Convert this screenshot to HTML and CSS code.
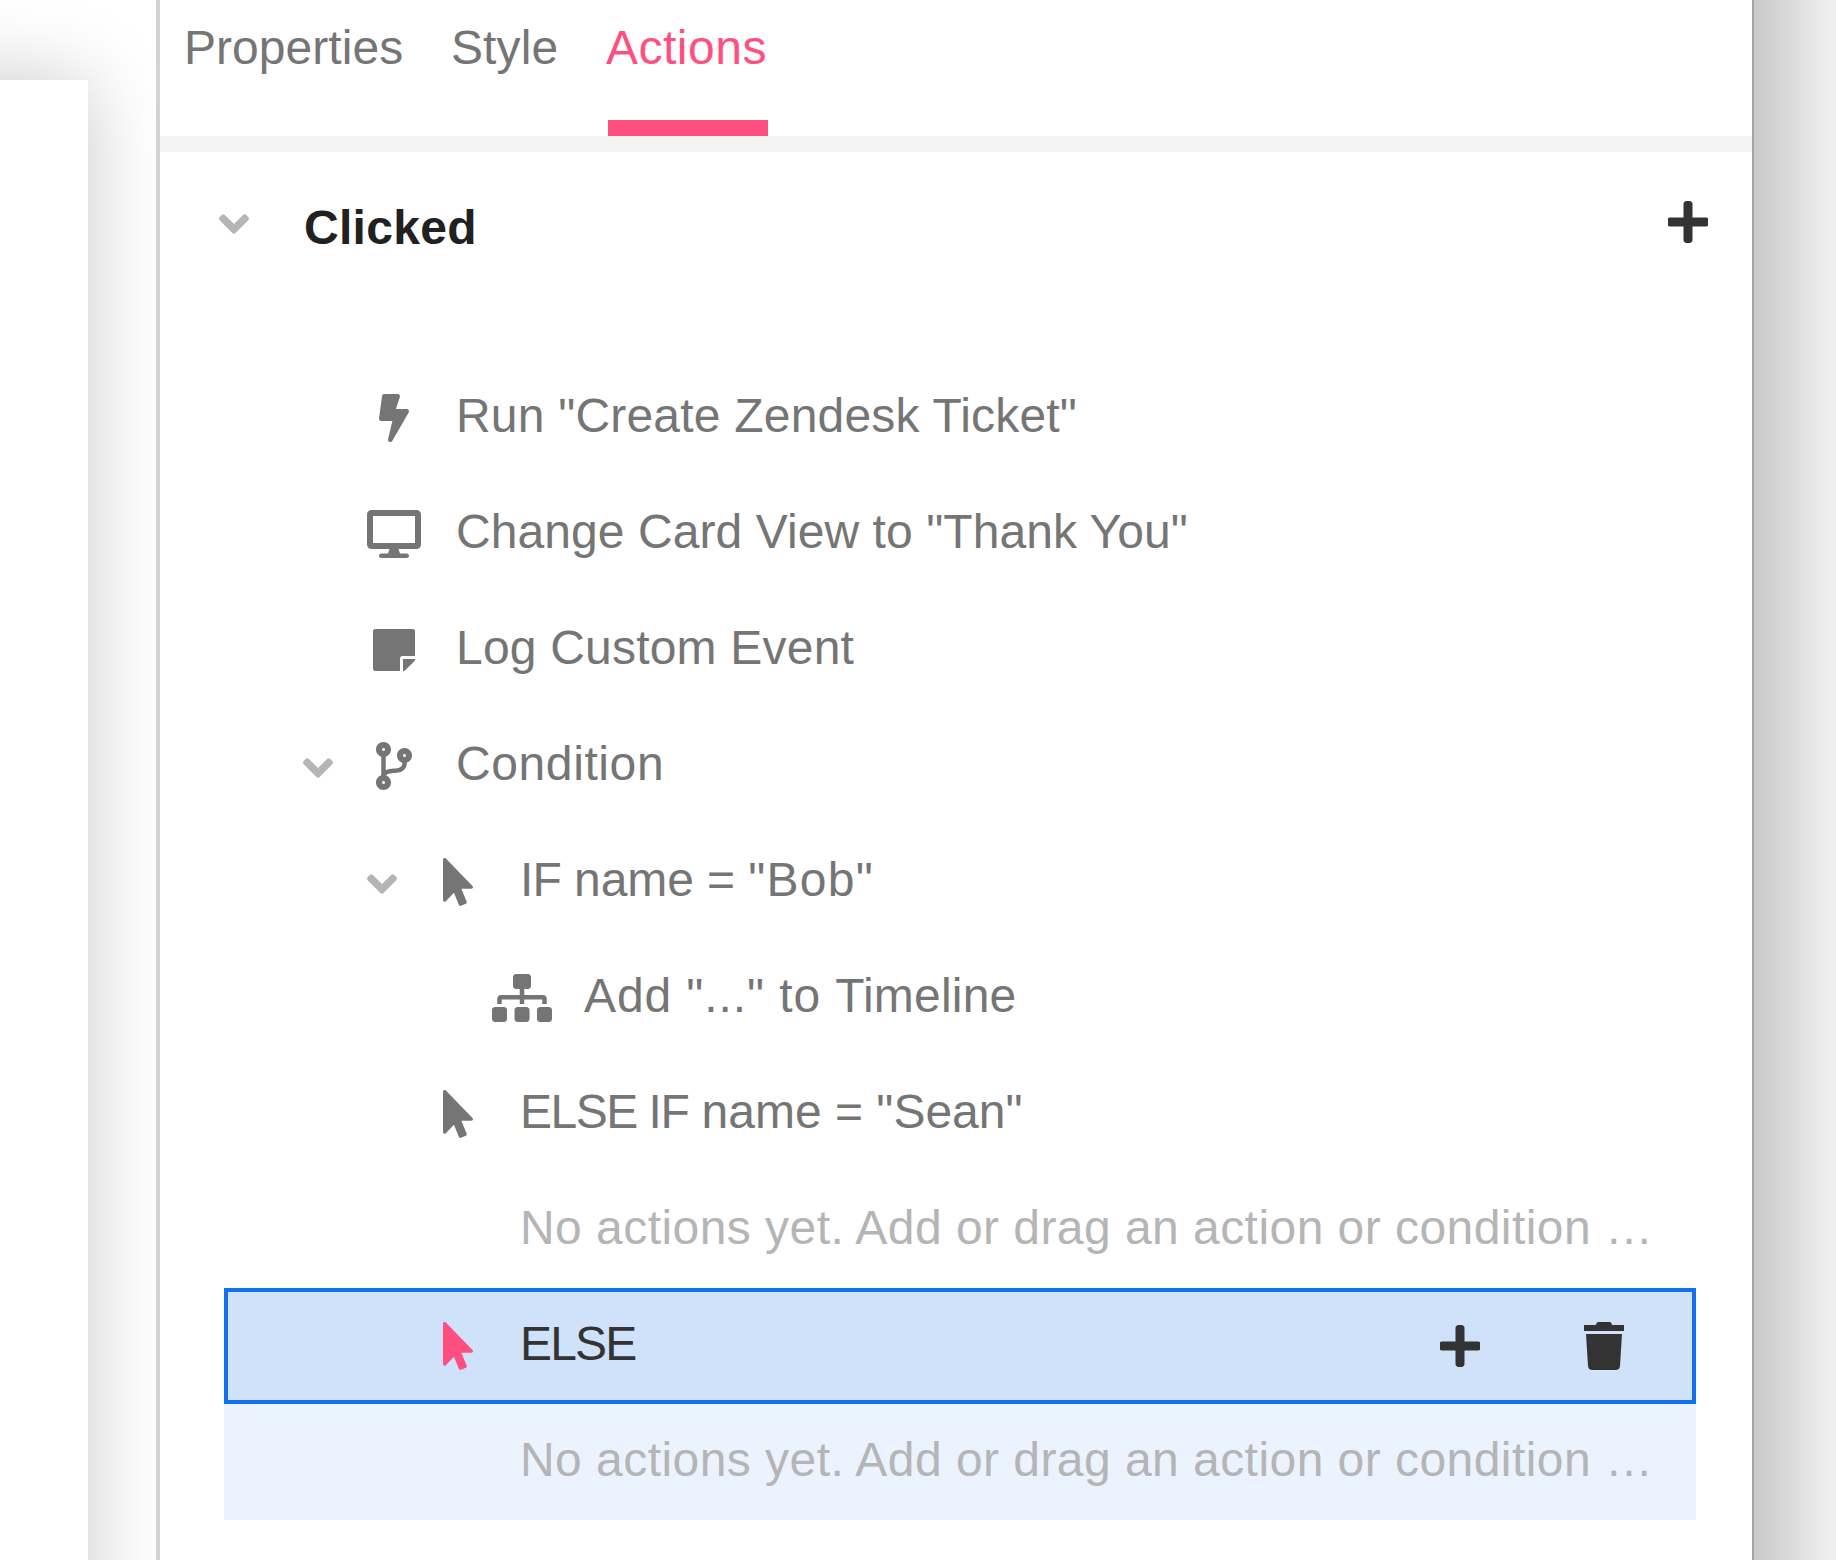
FILE: index.html
```
<!DOCTYPE html>
<html lang="en">
<head>
<meta charset="utf-8">
<title>Actions</title>
<link rel="stylesheet" href="styles.css">
</head>
<body>
<svg class="sprite" aria-hidden="true">
  <symbol id="angle" viewBox="0 0 320 512"><path d="M143 352.3L7 216.3c-9.4-9.4-9.4-24.6 0-33.9l22.6-22.6c9.4-9.4 24.6-9.4 33.9 0l96.4 96.4 96.4-96.4c9.4-9.4 24.6-9.4 33.9 0l22.6 22.6c9.4 9.4 9.4 24.6 0 33.9l-136 136c-9.2 9.4-24.4 9.4-33.8 0z"/></symbol>
  <symbol id="plus" viewBox="10.67 0 426.67 512"><path d="M416 208H272V64c0-17.67-14.33-32-32-32h-32c-17.67 0-32 14.33-32 32v144H32c-17.67 0-32 14.33-32 32v32c0 17.67 14.33 32 32 32h144v144c0 17.67 14.33 32 32 32h32c17.67 0 32-14.33 32-32V304h144c17.67 0 32-14.33 32-32v-32c0-17.67-14.33-32-32-32z"/></symbol>
  <symbol id="trash" viewBox="10.67 0 426.67 512"><path d="M432 32H312l-9.4-18.7A24 24 0 0 0 281.1 0H166.8a23.72 23.72 0 0 0-21.4 13.3L136 32H16A16 16 0 0 0 0 48v32a16 16 0 0 0 16 16h416a16 16 0 0 0 16-16V48a16 16 0 0 0-16-16zM53.2 467a48 48 0 0 0 47.9 45h245.8a48 48 0 0 0 47.9-45L416 128H32z"/></symbol>
  <symbol id="pointer" viewBox="0 0 320 512"><path d="M302.189 329.126H196.105l55.831 135.993c3.889 9.428-.555 19.999-9.444 23.999l-49.165 21.427c-9.165 4-19.443-.571-23.332-9.714l-53.053-129.136-86.664 89.138C18.729 472.71 0 463.554 0 447.977V18.299C0 1.899 19.921-6.096 30.277 5.443l284.412 292.542c11.472 11.179 3.007 31.141-12.5 31.141z"/></symbol>
</svg>
<div class="app">
  <div class="canvas"><div class="card"></div></div>
  <main class="panel">
    <nav class="tabs">
      <a class="tab tab-properties">Properties</a>
      <a class="tab tab-style">Style</a>
      <a class="tab tab-actions">Actions</a>
    </nav>
    <header class="section">
      <svg class="toggle"><use href="#angle"/></svg>
      <h2>Clicked</h2>
      <svg class="tool"><use href="#plus"/></svg>
    </header>
    <ul class="tree">
      <li class="row">
        <span class="toggle"></span>
        <svg class="icon" viewBox="0 0 320 512"><path d="M296 160H180.6l42.6-129.8C227.2 15 215.7 0 200 0H56C44 0 33.8 8.9 32.2 20.8l-32 240C-1.7 275.2 9.5 288 24 288h118.7L96.6 482.5c-3.6 15.2 8 29.5 23.3 29.5 8.4 0 16.4-4.4 20.8-12l176-304c9.3-15.9-2.2-36-20.7-36z"/></svg>
        <span class="label run">Run "Create Zendesk Ticket"</span>
      </li>
      <li class="row">
        <span class="toggle"></span>
        <svg class="icon" viewBox="0 0 576 512"><path d="M528 0H48C21.5 0 0 21.5 0 48v320c0 26.5 21.5 48 48 48h192l-16 48h-72c-13.3 0-24 10.7-24 24s10.7 24 24 24h272c13.3 0 24-10.7 24-24s-10.7-24-24-24h-72l-16-48h192c26.5 0 48-21.5 48-48V48c0-26.5-21.5-48-48-48zm-16 352H64V64h448v288z"/></svg>
        <span class="label change">Change Card View to "Thank You"</span>
      </li>
      <li class="row">
        <span class="toggle"></span>
        <svg class="icon" viewBox="0 0 448 512"><path d="M312 320h136V56c0-13.3-10.7-24-24-24H24C10.7 32 0 42.7 0 56v400c0 13.3 10.7 24 24 24h264V344c0-13.2 10.8-24 24-24zm129 55l-98 98c-4.5 4.5-10.6 7-17 7h-6V352h128v6.1c0 6.3-2.5 12.4-7 16.9z"/></svg>
        <span class="label log">Log Custom Event</span>
      </li>
      <li class="row">
        <svg class="toggle"><use href="#angle"/></svg>
        <svg class="icon" viewBox="0 0 384 512"><path d="M384 144c0-44.2-35.8-80-80-80s-80 35.8-80 80c0 36.4 24.3 67.1 57.5 76.8-.6 16.1-4.2 28.5-11 36.9-15.4 19.2-49.3 22.4-85.2 25.7-28.2 2.6-57.4 5.4-81.3 16.9v-144c32.5-10.2 56-40.5 56-76.3 0-44.2-35.8-80-80-80S0 35.8 0 80c0 35.8 23.5 66.1 56 76.3v199.3C23.5 365.9 0 396.2 0 432c0 44.2 35.8 80 80 80s80-35.8 80-80c0-34-21.2-63.1-51.2-74.6 3.1-5.2 7.8-9.8 14.9-13.4 16.2-8.2 40.4-10.4 66.1-12.8 42.2-3.9 90-8.4 118.2-43.4 14-17.4 21.1-39.8 21.6-67.9 31.6-10.8 54.4-40.7 54.4-75.9zM80 64c8.8 0 16 7.2 16 16s-7.2 16-16 16-16-7.2-16-16 7.2-16 16-16zm0 384c-8.8 0-16-7.2-16-16s7.2-16 16-16 16 7.2 16 16-7.2 16-16 16zm224-320c8.8 0 16 7.2 16 16s-7.2 16-16 16-16-7.2-16-16 7.2-16 16-16z"/></svg>
        <span class="label condition">Condition</span>
      </li>
      <li class="row level-1">
        <svg class="toggle"><use href="#angle"/></svg>
        <svg class="icon"><use href="#pointer"/></svg>
        <span class="label if"><span class="keyword">IF</span> name = <span class="value">"Bob"</span></span>
      </li>
      <li class="row level-2">
        <span class="toggle"></span>
        <svg class="icon" viewBox="0 0 640 512"><path d="M128 352H32c-17.67 0-32 14.33-32 32v96c0 17.67 14.33 32 32 32h96c17.67 0 32-14.33 32-32v-96c0-17.67-14.33-32-32-32zm-24-80h192v48h48v-48h192v48h48v-57.59c0-21.17-17.23-38.41-38.41-38.41H344v-64h40c17.67 0 32-14.33 32-32V32c0-17.67-14.33-32-32-32H256c-17.67 0-32 14.33-32 32v96c0 17.67 14.33 32 32 32h40v64H94.41C73.23 224 56 241.23 56 262.41V320h48v-48zm264 80h-96c-17.67 0-32 14.33-32 32v96c0 17.67 14.33 32 32 32h96c17.67 0 32-14.33 32-32v-96c0-17.67-14.33-32-32-32zm240 0h-96c-17.67 0-32 14.33-32 32v96c0 17.67 14.33 32 32 32h96c17.67 0 32-14.33 32-32v-96c0-17.67-14.33-32-32-32z"/></svg>
        <span class="label add">Add "..." to <span class="target">Timeline</span></span>
      </li>
      <li class="row level-1">
        <span class="toggle"></span>
        <svg class="icon"><use href="#pointer"/></svg>
        <span class="label else-if"><span class="keyword">ELSE IF</span> name = "Sean"</span>
      </li>
      <li class="row level-1 empty">
        <span class="toggle"></span>
        <span class="icon"></span>
        <span class="label">No actions yet. Add or drag an action or condition …</span>
      </li>
      <li class="row level-1 selected">
        <span class="toggle"></span>
        <svg class="icon"><use href="#pointer"/></svg>
        <span class="label else">ELSE</span>
        <span class="tools">
          <svg class="tool"><use href="#plus"/></svg>
          <svg class="tool"><use href="#trash"/></svg>
        </span>
      </li>
      <li class="row level-1 empty child">
        <span class="toggle"></span>
        <span class="icon"></span>
        <span class="label">No actions yet. Add or drag an action or condition …</span>
      </li>
    </ul>
  </main>
  <aside class="backdrop"></aside>
</div>
</body>
</html>
```
FILE: styles.css
```
* { box-sizing: border-box; }

body {
  margin: 0;
  background: #fff;
  color: #757575;
  font: 48px/53px "Liberation Sans", Arial, sans-serif;
}

.sprite { display: none; }

svg { fill: currentColor; flex: none; }

.app {
  display: grid;
  grid-template-columns: 156px 1596px 84px;
  height: 1560px;
  overflow: hidden;
}

.canvas {
  overflow: hidden;
  padding: 80px 68px 0 0;
}

.card {
  height: 1700px;
  margin-left: -400px;
  background: #fff;
  box-shadow: 0 0 76px rgba(0, 0, 0, .22);
}

.panel {
  border-left: 4px solid #d3d3d3;
  background: #fff;
}

.backdrop {
  border-left: 2px solid #a3a3a3;
  background: linear-gradient(to right, #c9c9c9, #d9d9d9 42%, #e6e6e6 68%, #f0f0f0);
}

/* Tabs */
.tabs {
  display: flex;
  height: 152px;
  padding: 21px 0 0 24px;
  border-bottom: 16px solid #f3f3f3;
}

.tab { white-space: nowrap; }
.tab-properties { width: 267px; letter-spacing: .05px; }
.tab-style { width: 157px; letter-spacing: .1px; }
.tab-actions {
  width: 160px;
  border-bottom: 16px solid #ff4f81;
  color: #ff4f81;
  letter-spacing: .5px;
  text-indent: -2px;
}

/* Section heading */
.section {
  display: flex;
  align-items: center;
  height: 208px;
  padding: 0 44px 68px 59px;
}

.section .toggle { margin: 4px 55px 0 0; }

.section .tool { margin: 0 0 0 auto; }

h2 {
  margin: 11px 0 0;
  color: #212121;
  font-size: 48px;
  font-weight: 700;
  letter-spacing: .3px;
}

/* Action tree */
.tree {
  margin: 0 56px 0 64px;
  padding: 0;
  list-style: none;
}

.row {
  display: flex;
  align-items: center;
  height: 116px;
  padding-left: 79px;
}

.level-1 { padding-left: 143px; }
.level-2 { padding-left: 207px; }

.toggle {
  flex: none;
  width: 30px;
  height: 48px;
  margin: 4px 31px 0 0;
  color: #b5b5b5;
}

.icon {
  flex: none;
  width: 60px;
  height: 48px;
  margin-right: 32px;
}

.label {
  padding-bottom: 5px;
  line-height: 111px;
  white-space: nowrap;
}

.run { letter-spacing: .2px; }
.change { letter-spacing: .07px; }
.log { letter-spacing: .2px; }
.condition { letter-spacing: .6px; }

.if { letter-spacing: -.1px; }
.if .keyword { letter-spacing: -.9px; }
.if .value { letter-spacing: 1.3px; }

.add { letter-spacing: .9px; }
.add .target { letter-spacing: .2px; }

.else-if { letter-spacing: 0; }
.else-if .keyword { letter-spacing: -1.5px; }

.else { letter-spacing: -1.8px; }

.empty { color: #b5b5b5; letter-spacing: .45px; }

.selected {
  background: #d0e1fa;
  box-shadow: inset 0 0 0 4px #1170ee;
  color: #333;
}

.selected .icon { color: #ff4f81; }

.child { background: #ebf3ff; }

.tools {
  display: flex;
  gap: 104px;
  margin: 0 72px 0 auto;
}

.tool {
  width: 40px;
  height: 48px;
  color: #333;
}
```
